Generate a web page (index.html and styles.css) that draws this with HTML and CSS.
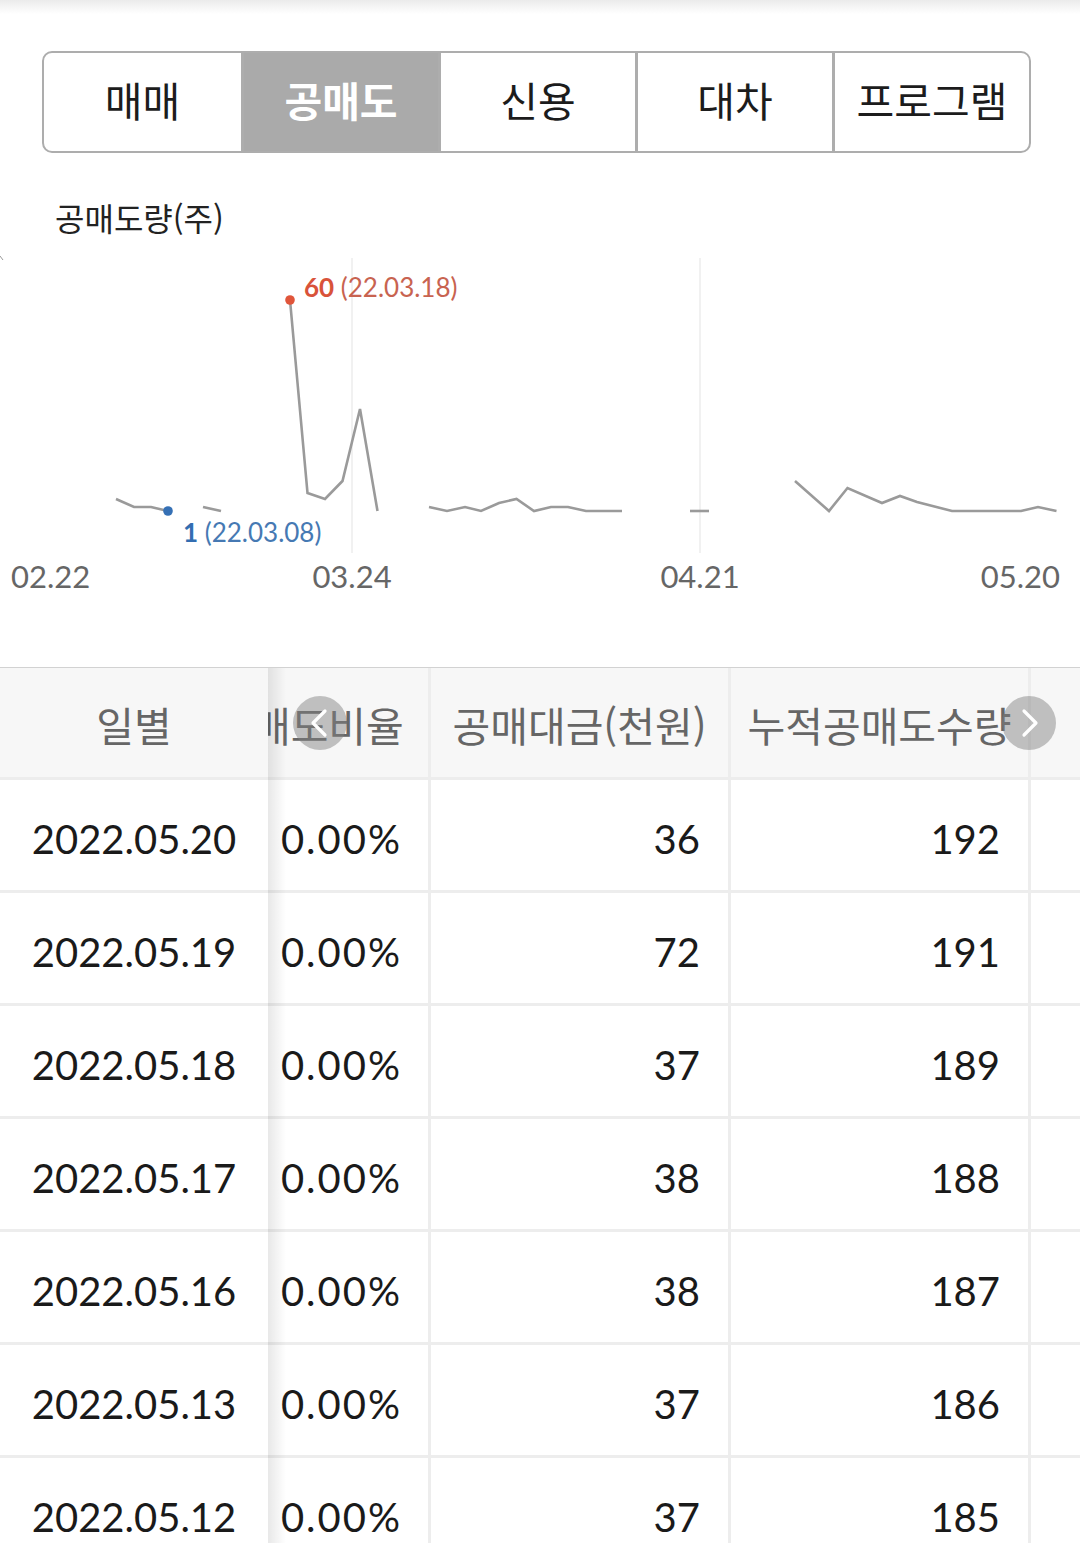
FILE: index.html
```html
<!DOCTYPE html>
<html lang="ko">
<head>
<meta charset="utf-8">
<link rel="stylesheet" href="styles.css">
</head>
<body>
<div class="topshade"></div>
<div class="tabs">
  <div class="tab">매매</div>
  <div class="tab active">공매도</div>
  <div class="tab">신용</div>
  <div class="tab">대차</div>
  <div class="tab">프로그램</div>
</div>
<div class="chart-title">공매도량(주)</div>
<svg class="chart" width="1080" height="430" viewBox="0 237 1080 430">
  <line x1="0" y1="256" x2="3" y2="260" class="tick"/>
  <line x1="352" y1="258" x2="352" y2="553" class="grid"/>
  <line x1="700" y1="258" x2="700" y2="553" class="grid"/>
  <polyline class="ln" points="116,499 134,507 151,507 168,511"/>
  <polyline class="ln" points="203,507 221,511"/>
  <polyline class="ln" points="290,300 307.5,493 325,499 342.5,481 360,409 377.5,511"/>
  <polyline class="ln" points="429,507 447,511 465,507 481,511 499,503 516.5,499 534,511 551,507 568,507 586,511 604,511 622,511"/>
  <polyline class="ln" points="690,511 709,511"/>
  <polyline class="ln" points="795,481 829,511 847.5,488 882,503 900,496 917,502 952,511 969,511 987,511 1004,511 1021,511 1038,507 1056.5,511"/>
  <circle cx="290" cy="300" r="4.8" class="dot-max"/>
  <circle cx="168" cy="511" r="4.8" class="dot-min"/>
  <text x="304" y="297" class="lbl max"><tspan class="b">60</tspan> (22.03.18)</text>
  <text x="183" y="542" class="lbl min"><tspan class="b">1</tspan> (22.03.08)</text>
  <text x="11" y="588" class="axis">02.22</text>
  <text x="352" y="588" class="axis mid">03.24</text>
  <text x="700" y="588" class="axis mid">04.21</text>
  <text x="1060" y="588" class="axis end">05.20</text>
</svg>

<div class="table">
  <div class="fixed">
    <div class="hcell">일별</div>
    <div class="cell">2022.05.20</div>
    <div class="cell">2022.05.19</div>
    <div class="cell">2022.05.18</div>
    <div class="cell">2022.05.17</div>
    <div class="cell">2022.05.16</div>
    <div class="cell">2022.05.13</div>
    <div class="cell">2022.05.12</div>
  </div>
  <div class="scroll">
    <div class="inner">
      <div class="row head"><div class="c c2">공매도비율</div><div class="c c3">공매대금(천원)</div><div class="c c4">누적공매도수량</div><div class="c c5"></div></div>
      <div class="row"><div class="c c2">0.00%</div><div class="c c3">36</div><div class="c c4">192</div><div class="c c5"></div></div>
      <div class="row"><div class="c c2">0.00%</div><div class="c c3">72</div><div class="c c4">191</div><div class="c c5"></div></div>
      <div class="row"><div class="c c2">0.00%</div><div class="c c3">37</div><div class="c c4">189</div><div class="c c5"></div></div>
      <div class="row"><div class="c c2">0.00%</div><div class="c c3">38</div><div class="c c4">188</div><div class="c c5"></div></div>
      <div class="row"><div class="c c2">0.00%</div><div class="c c3">38</div><div class="c c4">187</div><div class="c c5"></div></div>
      <div class="row"><div class="c c2">0.00%</div><div class="c c3">37</div><div class="c c4">186</div><div class="c c5"></div></div>
      <div class="row"><div class="c c2">0.00%</div><div class="c c3">37</div><div class="c c4">185</div><div class="c c5"></div></div>
    </div>
  </div>
  <div class="arrow left">
    <svg width="54" height="54" viewBox="0 0 54 54"><polyline points="32,15 20,27 32,39" fill="none" stroke="#fff" stroke-width="3.2" stroke-linecap="round" stroke-linejoin="round"/></svg>
  </div>
  <div class="arrow right">
    <svg width="54" height="54" viewBox="0 0 54 54"><polyline points="22,15 34,27 22,39" fill="none" stroke="#fff" stroke-width="3.2" stroke-linecap="round" stroke-linejoin="round"/></svg>
  </div>
</div>
</body>
</html>
```

FILE: styles.css
```css
* { box-sizing: border-box; }
html, body {
  margin: 0;
  padding: 0;
  background: #fff;
  width: 1080px;
  height: 1543px;
  overflow: hidden;
  font-family: Lato, "Noto Sans CJK KR", sans-serif;
  color: #222;
}
.topshade {
  height: 14px;
  background: linear-gradient(#ebebeb, #ffffff);
}
.tabs {
  margin: 37px 49px 0 42px;
  height: 102px;
  border: 2.5px solid #adadad;
  border-radius: 10px;
  overflow: hidden;
  display: grid;
  grid-template-columns: repeat(5, 1fr);
}
.tab {
  display: flex;
  align-items: center;
  justify-content: center;
  font-family: "Noto Sans CJK KR", sans-serif;
  font-size: 41px;
  color: #1c1c1c;
  border-left: 3px solid #adadad;
  padding-bottom: 6px;
}
.tab:first-child { border-left: none; }
.tab.active {
  background: #aaaaaa;
  color: #fff;
  font-weight: 700;
}
.chart-title {
  margin: 44px 0 0 55px;
  font-family: "Noto Sans CJK KR", sans-serif;
  font-size: 32px;
  line-height: 40px;
  height: 40px;
  color: #222;
}
.chart { display: block; }
.chart .grid { stroke: #ececec; stroke-width: 1.5; }
.chart .tick { stroke: #999; stroke-width: 1; }
.chart .ln { fill: none; stroke: #9a9a9a; stroke-width: 2.6; stroke-linejoin: miter; }
.chart .dot-max { fill: #e0553a; }
.chart .dot-min { fill: #3570b5; }
.chart .lbl { font-family: Lato, sans-serif; font-size: 26px; }
.chart .lbl .b { font-weight: 700; }
.chart .max { fill: #c86350; }
.chart .max .b { fill: #d9533a; }
.chart .min { fill: #4679b3; }
.chart .min .b { fill: #336db1; }
.chart .axis { font-family: Lato, sans-serif; font-size: 31px; fill: #666; }
.chart .mid { text-anchor: middle; }
.chart .end { text-anchor: end; }

.table {
  position: relative;
  display: flex;
  border-top: 1px solid #d2d2d2;
}
.fixed {
  width: 268px;
  flex: none;
  position: relative;
  z-index: 2;
  background: #fff;
}
.fixed::after {
  content: "";
  position: absolute;
  top: 0;
  bottom: 0;
  right: -18px;
  width: 18px;
  background: linear-gradient(to right, rgba(0,0,0,0.09), rgba(0,0,0,0));
}
.hcell, .cell {
  height: 113px;
  border-bottom: 3px solid #ededed;
  display: flex;
  align-items: center;
  justify-content: center;
}
.hcell {
  height: 112px;
  background: #f7f7f7;
  font-family: "Noto Sans CJK KR", sans-serif;
  font-size: 41px;
  color: #666;
  padding-top: 2px;
}
.cell {
  font-size: 40px;
  color: #1a1a1a;
  padding-top: 8px;
}
.scroll {
  flex: 1;
  overflow: hidden;
}
.inner {
  margin-left: -77px;
  width: 1100px;
}
.row {
  display: flex;
  height: 113px;
  border-bottom: 3px solid #ededed;
}
.row.head {
  height: 112px;
  background: #f7f7f7;
}
.c {
  display: flex;
  align-items: center;
  justify-content: flex-end;
  padding-right: 28px;
  padding-top: 8px;
  font-size: 40px;
  color: #1a1a1a;
  border-right: 3px solid #ededed;
  white-space: nowrap;
}
.c2 { letter-spacing: 2px; padding-right: 26px; }
.head .c {
  justify-content: center;
  padding-right: 0;
  padding-top: 2px;
  letter-spacing: 0;
  font-family: "Noto Sans CJK KR", sans-serif;
  font-size: 41px;
  color: #666;
}
.c2 { width: 240px; }
.c3 { width: 300px; }
.c4 { width: 300px; }
.c5 { width: 200px; border-right: none; }
.arrow {
  position: absolute;
  top: 28px;
  width: 54px;
  height: 54px;
  border-radius: 50%;
  background: rgba(128,128,128,0.47);
  z-index: 3;
}
.arrow svg { display: block; }
.arrow.left { left: 293px; }
.arrow.right { left: 1002px; }
```
